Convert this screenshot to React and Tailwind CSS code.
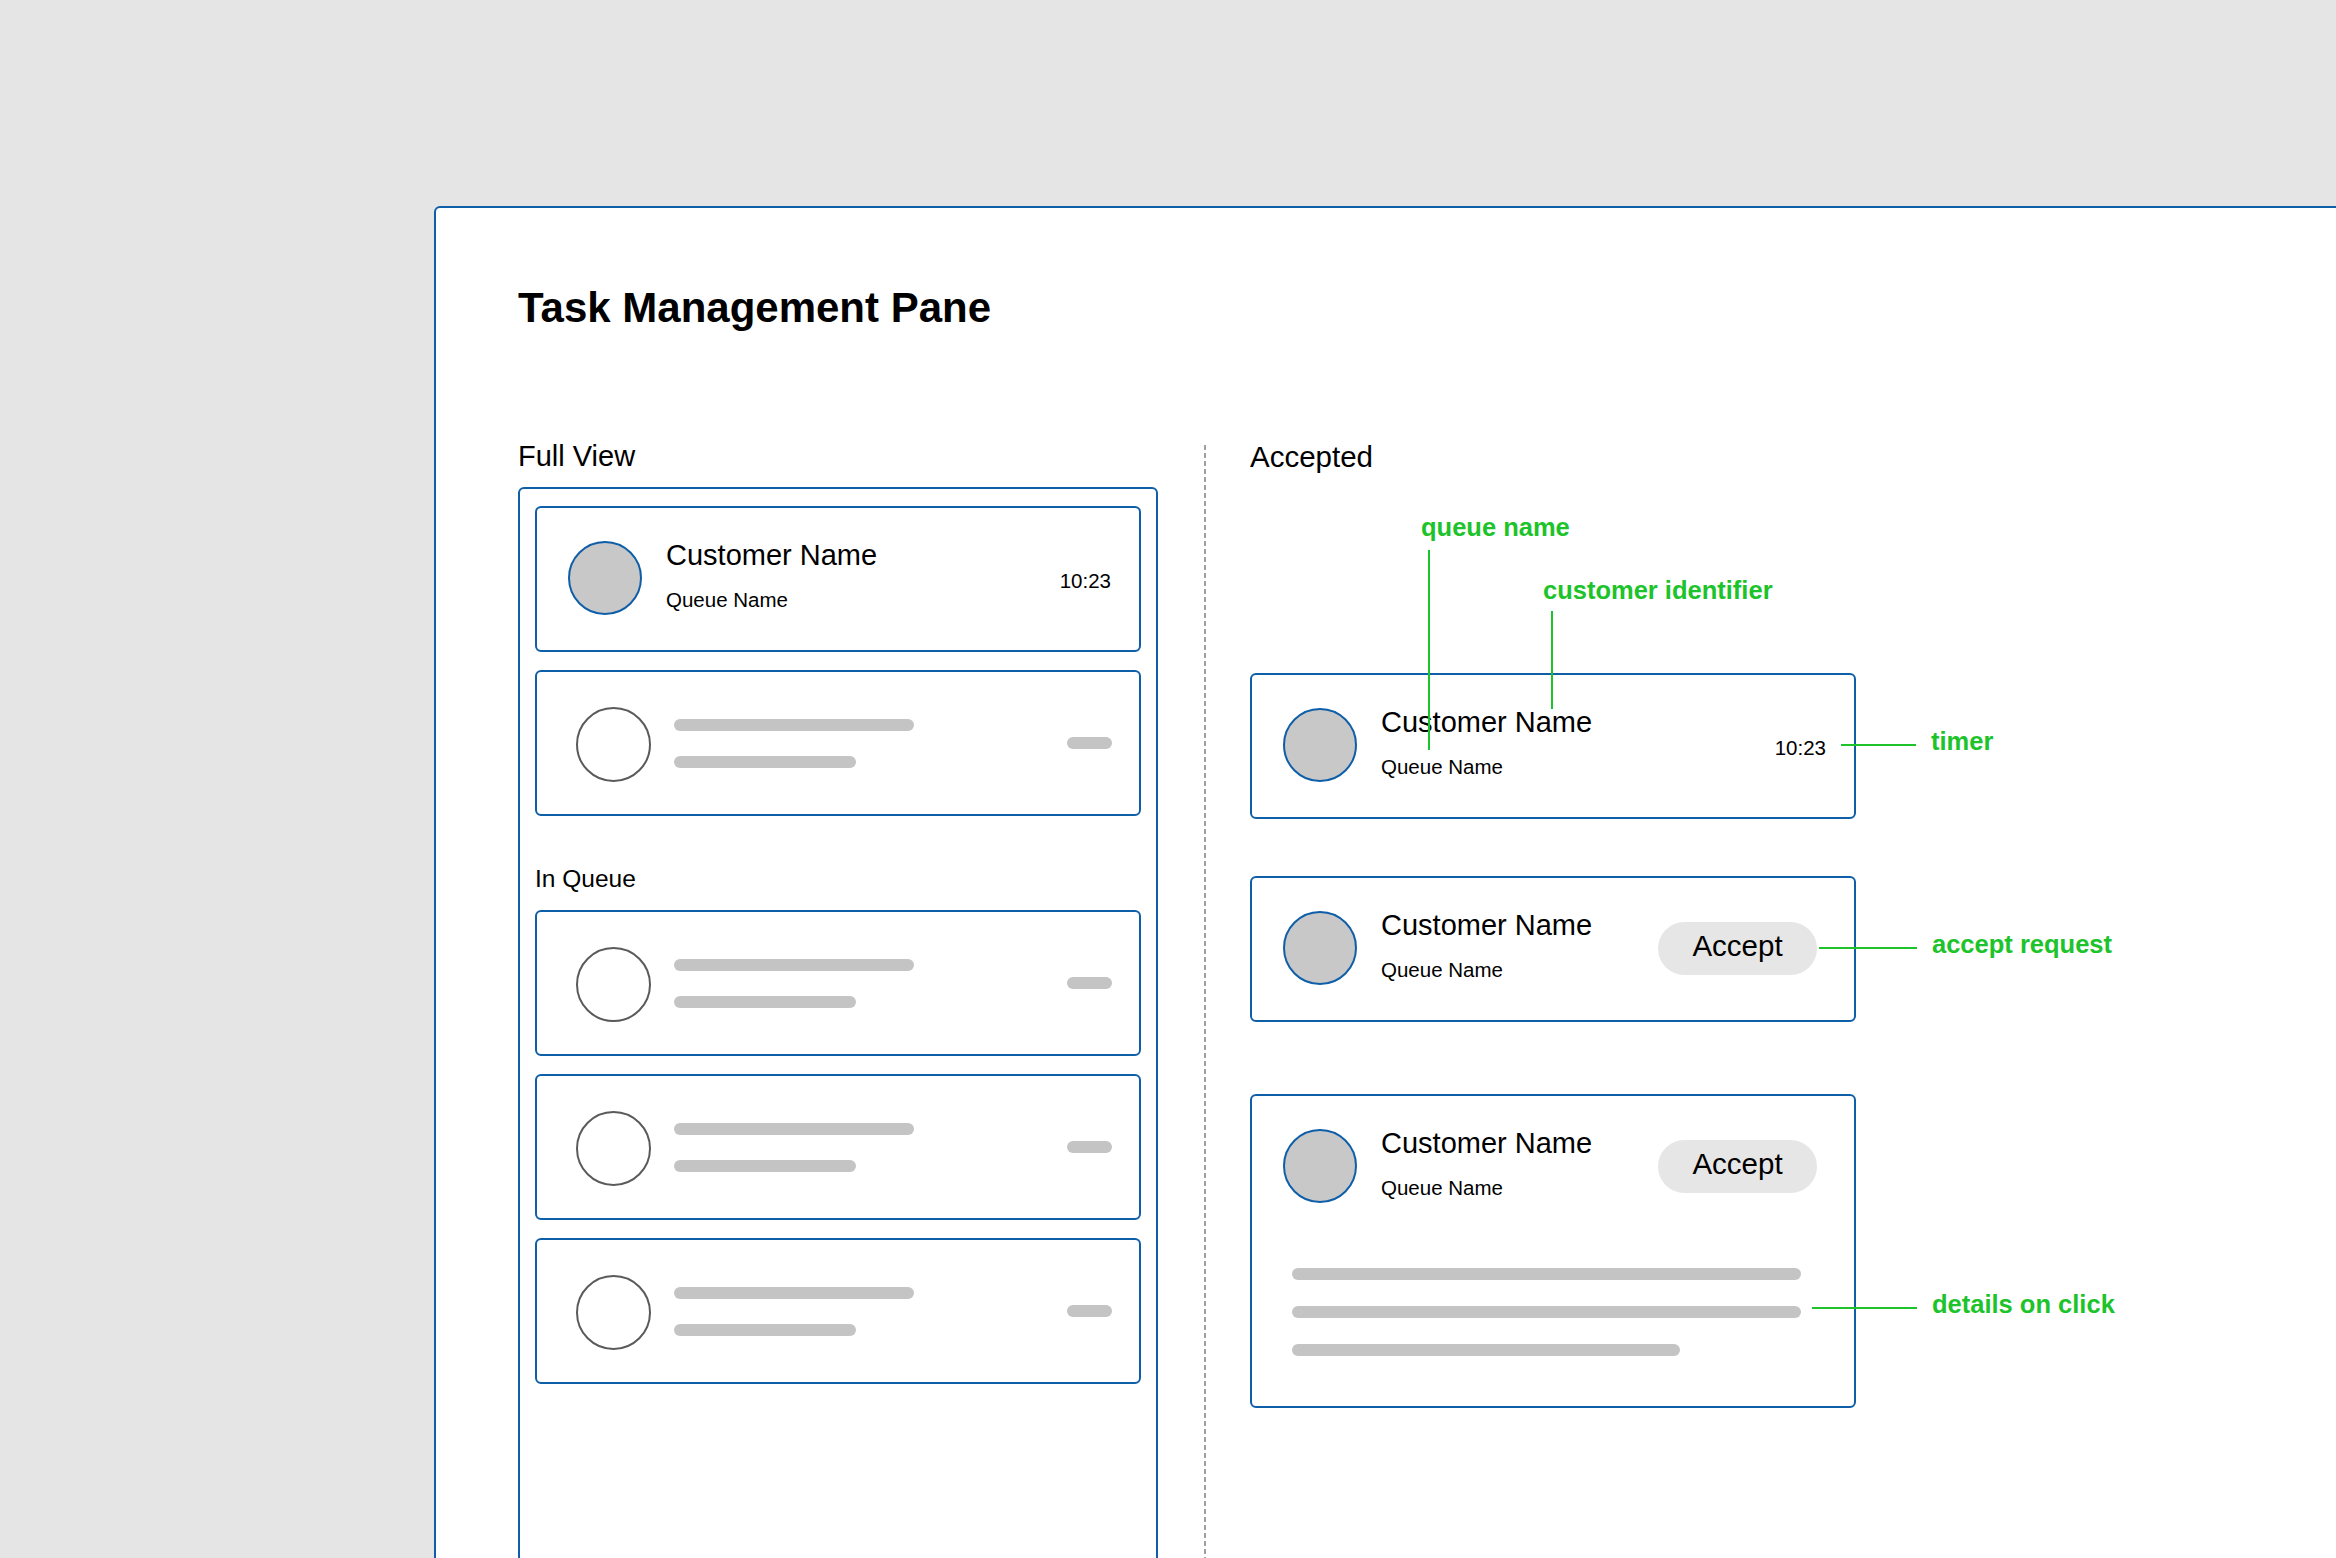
import React from 'react';

const BLUE = 'border-[#0f5ea8]';

const Avatar = () => (
  <div className="ml-[31px] mt-[33px] h-[74px] w-[74px] shrink-0 rounded-full border-2 border-[#0f5ea8] bg-[#c8c8c8]" />
);

const NameBlock = () => (
  <div className="ml-[24px] mt-[32px] flex flex-col">
    <span className="text-[29px] leading-[30px]">Customer Name</span>
    <span className="mt-[20px] text-[20.5px] leading-[20px]">Queue Name</span>
  </div>
);

const Card = ({ className = 'h-[146px] items-start', children }) => (
  <div className={`relative flex w-[606px] shrink-0 rounded-md border-2 ${BLUE} bg-white ${className}`}>
    {children}
  </div>
);

const TaskCard = () => (
  <Card>
    <Avatar />
    <NameBlock />
    <span className="ml-auto mr-[28px] mt-[63px] text-[20.5px] leading-[20px]">10:23</span>
  </Card>
);

const SkeletonCard = () => (
  <Card>
    <div className="ml-[39px] mt-[35px] h-[75px] w-[75px] shrink-0 rounded-full border-2 border-[#5a5a5a]" />
    <div className="ml-[23px] mt-[47px] flex flex-col gap-[25px]">
      <div className="h-[12px] w-[240px] rounded-full bg-[#c4c4c4]" />
      <div className="h-[12px] w-[182px] rounded-full bg-[#c4c4c4]" />
    </div>
    <div className="ml-auto mr-[27px] mt-[65px] h-[12px] w-[45px] rounded-full bg-[#c4c4c4]" />
  </Card>
);

const AcceptButton = () => (
  <button className="ml-auto mr-[37px] mt-[44px] flex h-[53px] w-[159px] shrink-0 items-center justify-center rounded-full bg-[#e6e6e6] pb-[5px] text-[29.5px] leading-none text-black">
    Accept
  </button>
);

const Note = ({ className, lineClass, children }) => (
  <div className={`absolute flex items-center gap-[15px] ${className}`}>
    <span className={`h-[2px] bg-[#1dc32a] ${lineClass}`} />
    <span className="whitespace-nowrap pb-[7px] text-[25.5px] font-bold leading-none text-[#1dc32a]">{children}</span>
  </div>
);

const App = () => {
  return (
    <div className="h-screen overflow-hidden bg-[#e5e5e5] pl-[434px] pt-[206px] font-['Liberation_Sans',Arial,sans-serif] text-black">
      <div className={`flex h-[1500px] w-[2000px] flex-col rounded-md border-2 ${BLUE} bg-white pl-[82px] pt-[79px]`}>
        <h1 className="text-[42px] font-bold leading-none">Task Management Pane</h1>

        <div className="mt-[113px] flex flex-1">
          {/* full view */}
          <div className="flex w-[640px] flex-col">
            <h2 className="text-[29px] leading-none">Full View</h2>
            <div className={`mt-[16px] flex flex-1 flex-col gap-[18px] rounded-md border-2 ${BLUE} px-[15px] pt-[17px]`}>
              <TaskCard />
              <SkeletonCard />
              <h3 className="mt-[33px] text-[24.5px] leading-none">In Queue</h3>
              <SkeletonCard />
              <SkeletonCard />
              <SkeletonCard />
            </div>
          </div>

          <div className="ml-[46px] mt-[3px] w-[2px] bg-[repeating-linear-gradient(to_bottom,#a0a0a0_0px,#a0a0a0_5px,transparent_5px,transparent_8px)]" />

          {/* accepted states */}
          <div className="ml-[44px] flex flex-col">
            <h2 className="text-[29.5px] leading-none">Accepted</h2>

            <div className="mt-[201px]">
              <Card>
                <Avatar />
                <NameBlock />
                <span className="ml-auto mr-[28px] mt-[63px] text-[20.5px] leading-[20px]">10:23</span>

                <div className="absolute -top-[160px] left-[169px] flex flex-col items-start">
                  <span className="whitespace-nowrap text-[25.5px] font-bold leading-none text-[#1dc32a]">queue name</span>
                  <span className="ml-[7px] mt-[10px] h-[200px] w-[2px] bg-[#1dc32a]" />
                </div>
                <div className="absolute -top-[97px] left-[291px] flex flex-col items-start">
                  <span className="whitespace-nowrap text-[25.5px] font-bold leading-none text-[#1dc32a]">customer identifier</span>
                  <span className="ml-[8px] mt-[8px] h-[98px] w-[2px] bg-[#1dc32a]" />
                </div>
                <Note className="left-[589px] top-[54px]" lineClass="w-[75px]">timer</Note>
              </Card>
            </div>

            <div className="mt-[57px]">
              <Card>
                <Avatar />
                <NameBlock />
                <AcceptButton />
                <Note className="left-[567px] top-[54px]" lineClass="w-[98px]">accept request</Note>
              </Card>
            </div>

            <div className="mt-[72px]">
              <Card className="flex-col">
                <div className="flex items-start">
                  <Avatar />
                  <NameBlock />
                  <AcceptButton />
                </div>
                <div className="ml-[40px] mt-[65px] flex flex-col gap-[26px] pb-[50px]">
                  <div className="h-[12px] w-[509px] rounded-full bg-[#c4c4c4]" />
                  <div className="h-[12px] w-[509px] rounded-full bg-[#c4c4c4]" />
                  <div className="h-[12px] w-[388px] rounded-full bg-[#c4c4c4]" />
                </div>
                <Note className="left-[560px] top-[196px]" lineClass="w-[105px]">details on click</Note>
              </Card>
            </div>
          </div>
        </div>
      </div>
    </div>
  );
};

export default App;
